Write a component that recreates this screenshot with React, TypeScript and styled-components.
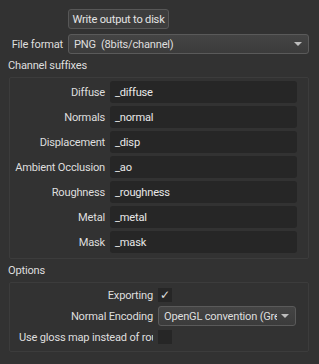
import React from "react";
import styled, { createGlobalStyle } from "styled-components";

const Global = createGlobalStyle`
  html, body { margin: 0; padding: 0; background: #323232; }
  body { font-family: Roboto, "Noto Sans", sans-serif; font-size: 11.1px; letter-spacing: -0.2px; color: #dedede; }
  * { box-sizing: border-box; }
`;

const Page = styled.div`
  width: 319px;
  height: 364px;
  padding: 9px 10px 0 8px;
  display: flex;
  flex-direction: column;
`;

const ButtonRow = styled.div`
  display: flex;
  padding-left: 60px;
`;

const Button = styled.div`
  height: 20px;
  width: 101px;
  display: flex;
  align-items: center;
  justify-content: center;
  background: #3d3d3d;
  border: 1px solid #575757;
  border-radius: 3px;
  white-space: nowrap;
  color: #e4e4e4;
`;

const FormatRow = styled.div`
  display: flex;
  align-items: center;
  margin-top: 5px;
  gap: 5px;
`;

const FormLabel = styled.div<{ $w: number; $clip?: boolean }>`
  width: ${(p) => p.$w}px;
  flex: none;
  display: flex;
  justify-content: ${(p) => (p.$clip ? "flex-start" : "flex-end")};
  white-space: nowrap;
  overflow: ${(p) => (p.$clip ? "hidden" : "visible")};
`;

const Combo = styled.div<{ $w?: number }>`
  height: 20px;
  ${(p) => (p.$w ? `width: ${p.$w}px; flex: none;` : "flex: 1;")}
  display: flex;
  align-items: center;
  padding: 0 6px 0 5px;
  background: linear-gradient(#444444, #3b3b3b);
  border: 1px solid #5a5a5a;
  border-radius: 3px;
  white-space: nowrap;
  overflow: hidden;
`;

const ComboText = styled.span`
  flex: 1;
  min-width: 0;
  overflow: hidden;
  white-space: nowrap;
`;

const Arrow = styled.span`
  flex: none;
  width: 0;
  height: 0;
  margin-left: 4px;
  border-left: 4px solid transparent;
  border-right: 4px solid transparent;
  border-top: 4px solid #bdbdbd;
`;

const SectionTitle = styled.div<{ $top: number }>`
  margin-top: ${(p) => p.$top}px;
  height: 16px;
  line-height: 16px;
`;

const Group = styled.div<{ $top: number; $pt: number; $pb: number; $gap: number }>`
  margin-top: ${(p) => p.$top}px;
  margin-left: 1px;
  width: 300px;
  border: 1px solid #3c3c3c;
  border-radius: 2px;
  padding: ${(p) => p.$pt}px 11px ${(p) => p.$pb}px 9px;
  display: flex;
  flex-direction: column;
  gap: ${(p) => p.$gap}px;
`;

const Row = styled.div<{ $h: number }>`
  display: flex;
  align-items: center;
  gap: 5px;
  height: ${(p) => p.$h}px;
`;

const Input = styled.div`
  flex: 1;
  height: 22px;
  display: flex;
  align-items: center;
  padding-left: 5px;
  background: #262626;
  border-radius: 3px;
  color: #e8e8e8;
`;

const Check = styled.div`
  width: 14px;
  height: 14px;
  flex: none;
  background: #262626;
  display: flex;
  align-items: center;
  justify-content: center;
  color: #e0e0e0;
  font-family: "DejaVu Sans", sans-serif;
  font-size: 12px;
  line-height: 1;
`;

const suffixes: [string, string][] = [
  ["Diffuse", "_diffuse"],
  ["Normals", "_normal"],
  ["Displacement", "_disp"],
  ["Ambient Occlusion", "_ao"],
  ["Roughness", "_roughness"],
  ["Metal", "_metal"],
  ["Mask", "_mask"],
];

export default function App() {
  return (
    <>
      <Global />
      <Page>
        <ButtonRow>
          <Button>Write output to disk</Button>
        </ButtonRow>
        <FormatRow>
          <FormLabel $w={55}>File format</FormLabel>
          <Combo>
            <ComboText>PNG&nbsp;&nbsp;(8bits/channel)</ComboText>
            <Arrow />
          </Combo>
        </FormatRow>
        <SectionTitle $top={4}>Channel suffixes</SectionTitle>
        <Group $top={3} $pt={3} $pb={5} $gap={3}>
          {suffixes.map(([l, v]) => (
            <Row key={l} $h={22}>
              <FormLabel $w={86}>{l}</FormLabel>
              <Input>{v}</Input>
            </Row>
          ))}
        </Group>
        <SectionTitle $top={4}>Options</SectionTitle>
        <Group $top={3} $pt={4} $pb={6} $gap={3}>
          <Row $h={16}>
            <FormLabel $w={134}>Exporting</FormLabel>
            <Check>✓</Check>
          </Row>
          <Row $h={20}>
            <FormLabel $w={134}>Normal Encoding</FormLabel>
            <Combo $w={138}>
              <ComboText>OpenGL convention (Green up)</ComboText>
              <Arrow />
            </Combo>
          </Row>
          <Row $h={16}>
            <FormLabel $w={134} $clip>Use gloss map instead of roughness</FormLabel>
            <Check />
          </Row>
        </Group>
      </Page>
    </>
  );
}
